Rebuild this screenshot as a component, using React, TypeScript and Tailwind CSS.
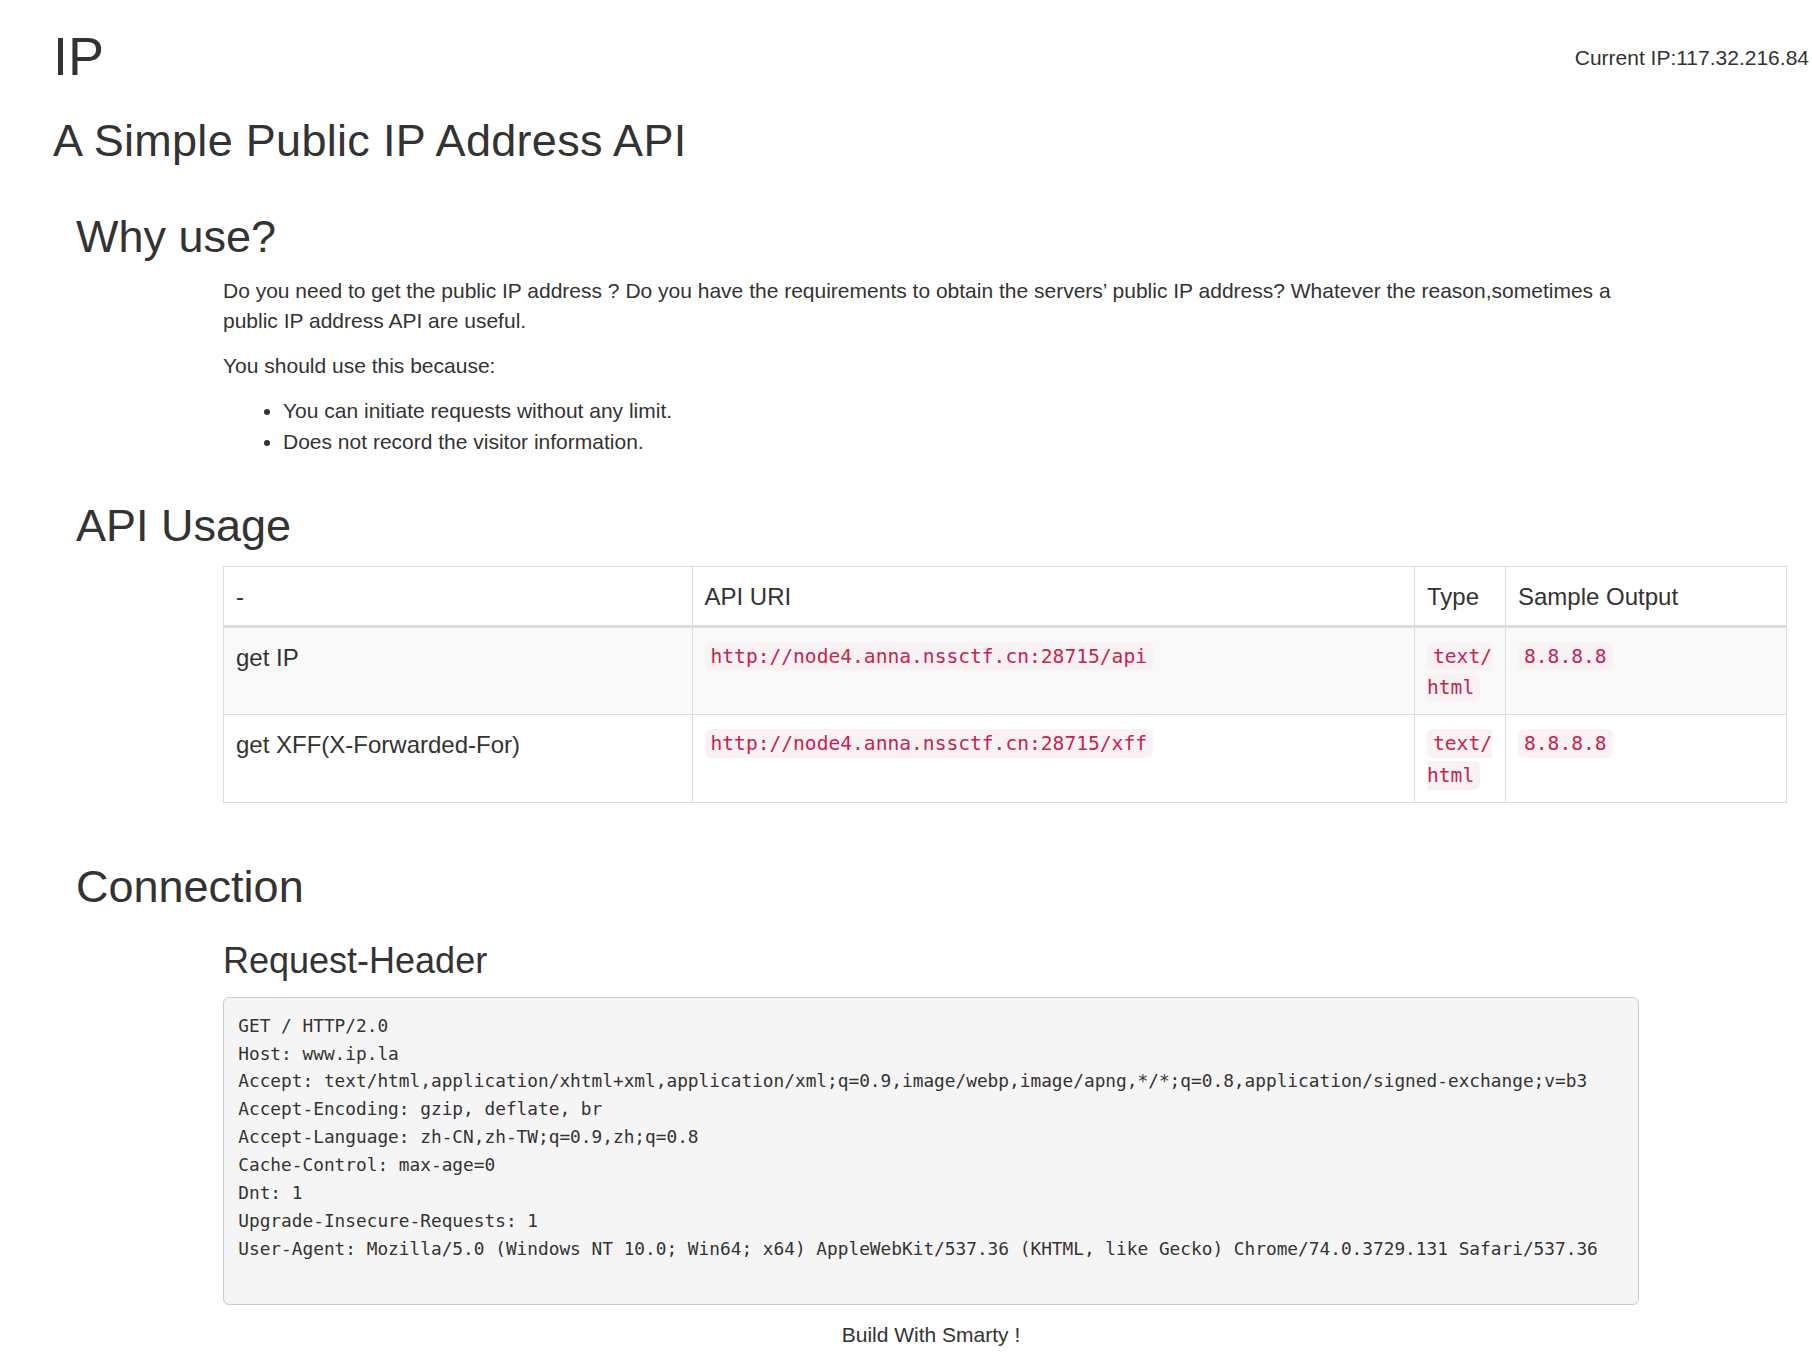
import React from 'react';

const requestHeader = [
  'GET / HTTP/2.0',
  'Host: www.ip.la',
  'Accept: text/html,application/xhtml+xml,application/xml;q=0.9,image/webp,image/apng,*/*;q=0.8,application/signed-exchange;v=b3',
  'Accept-Encoding: gzip, deflate, br',
  'Accept-Language: zh-CN,zh-TW;q=0.9,zh;q=0.8',
  'Cache-Control: max-age=0',
  'Dnt: 1',
  'Upgrade-Insecure-Requests: 1',
  'User-Agent: Mozilla/5.0 (Windows NT 10.0; Win64; x64) AppleWebKit/537.36 (KHTML, like Gecko) Chrome/74.0.3729.131 Safari/537.36',
];

const apis = [
  { name: 'get IP', uri: 'http://node4.anna.nssctf.cn:28715/api', output: '8.8.8.8' },
  { name: 'get XFF(X-Forwarded-For)', uri: 'http://node4.anna.nssctf.cn:28715/xff', output: '8.8.8.8' },
];

function Code({ children }: { children: React.ReactNode }) {
  return (
    <code className="rounded-[6px] bg-[#f9f2f4] px-[6px] py-[3px] align-[3px] font-['DejaVu_Sans_Mono',monospace] text-[19.6px] leading-none text-[#c7254e]">
      {children}
    </code>
  );
}

export default function App() {
  return (
    <div className="min-h-[1352px] bg-white font-['Liberation_Sans',Arial,sans-serif] text-[21px] leading-[30px] text-[#333]">
      <div className="flex items-start justify-between pl-[53px] pr-[3px]">
        <h1 className="mt-[27px] text-[54px] font-normal leading-[59.4px]">IP</h1>
        <div className="mt-[43px]">Current IP:117.32.216.84</div>
      </div>

      <h2 className="ml-[53px] mt-[30px] text-[45px] font-normal leading-[49.5px] tracking-[0.3px]">
        A Simple Public IP Address API
      </h2>

      <section className="pl-[76px]">
        <h2 className="mt-[46px] text-[45px] font-normal leading-[49.5px]">Why use?</h2>
        <div className="ml-[147px] w-[1416px]">
          <p className="mt-[15px] mb-[15px]">
            Do you need to get the public IP address ? Do you have the requirements to obtain the servers’ public IP
            address? Whatever the reason,sometimes a public IP address API are useful.
          </p>
          <p className="mb-[14px]">You should use this because:</p>
          <ul className="list-disc pl-[60px] leading-[31px]">
            <li>You can initiate requests without any limit.</li>
            <li>Does not record the visitor information.</li>
          </ul>
        </div>

        <h2 className="mt-[44px] text-[45px] font-normal leading-[49.5px]">API Usage</h2>
        <div className="ml-[147px] mt-[15.5px]">
          <table className="w-[1563px] table-fixed border-collapse text-[24px] leading-[31.5px]">
            <colgroup>
              <col className="w-[468.5px]" />
              <col className="w-[722.5px]" />
              <col className="w-[91px]" />
              <col className="w-[281px]" />
            </colgroup>
            <thead>
              <tr>
                <th className="border border-b-[3px] border-[#ddd] px-[12px] pt-[14px] pb-[12px] text-left align-top font-normal">
                  -
                </th>
                <th className="border border-b-[3px] border-[#ddd] px-[12px] pt-[14px] pb-[12px] text-left align-top font-normal">
                  API URI
                </th>
                <th className="border border-b-[3px] border-[#ddd] px-[12px] pt-[14px] pb-[12px] text-left align-top font-normal">
                  Type
                </th>
                <th className="border border-b-[3px] border-[#ddd] px-[12px] pt-[14px] pb-[12px] text-left align-top font-normal">
                  Sample Output
                </th>
              </tr>
            </thead>
            <tbody>
              {apis.map((api, i) => (
                <tr key={api.name} className={i % 2 === 0 ? 'bg-[#f9f9f9]' : 'bg-white'}>
                  <td className="border border-[#ddd] px-[12px] pt-[14px] pb-[9.5px] align-top">{api.name}</td>
                  <td className="border border-[#ddd] px-[12px] pt-[14px] pb-[9.5px] align-top">
                    <Code>{api.uri}</Code>
                  </td>
                  <td className="border border-[#ddd] px-[12px] pt-[14px] pb-[9.5px] align-top">
                    <Code>
                      text/
                      <wbr />
                      html
                    </Code>
                  </td>
                  <td className="border border-[#ddd] px-[12px] pt-[14px] pb-[9.5px] align-top">
                    <Code>{api.output}</Code>
                  </td>
                </tr>
              ))}
            </tbody>
          </table>
        </div>

        <h2 className="mt-[59px] text-[45px] font-normal leading-[49.5px]">Connection</h2>
        <div className="ml-[147px] w-[1416px]">
          <h3 className="mt-[29.5px] text-[36px] font-normal leading-[39.6px]">Request-Header</h3>
          <pre className="mt-[16px] rounded-[6px] border border-[#ccc] bg-[#f5f5f5] px-[14.25px] pt-[14.25px] pb-[42px] font-['DejaVu_Sans_Mono',monospace] text-[17.8px] leading-[27.86px] text-[#333]">
            {requestHeader.join('\n')}
          </pre>
          <p className="mt-[15px] text-center">Build With Smarty !</p>
        </div>
      </section>
    </div>
  );
}
